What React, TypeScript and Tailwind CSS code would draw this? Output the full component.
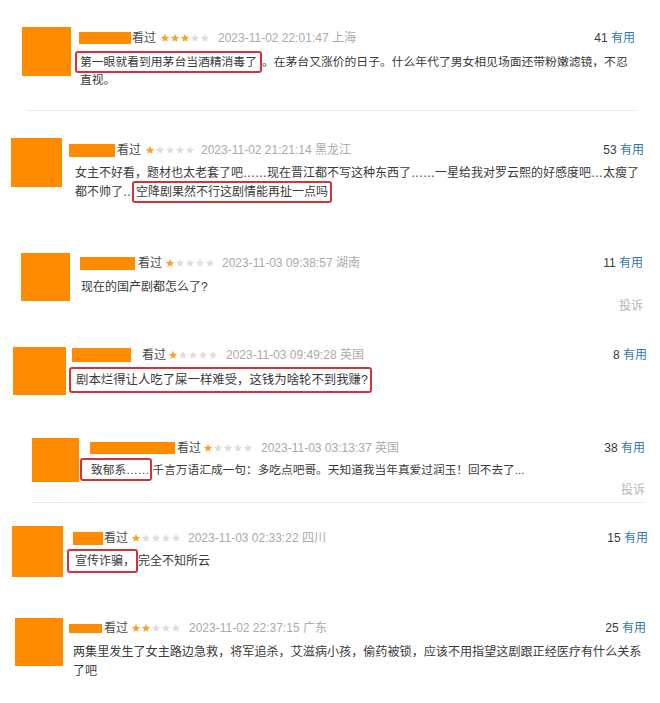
import React from 'react';

const STAR = 'M12 2l2.9 6.9 7.1.6-5.4 4.7 1.6 7-6.2-3.8-6.2 3.8 1.6-7L1.9 9.5 9 8.9z';

const Stars = ({ n }: { n: number }) => (
  <span className="flex">
    {[0, 1, 2, 3, 4].map((i) => (
      <svg key={i} viewBox="0 0 24 24" className="w-[10px] h-[10px]" fill={i < n ? '#f3a530' : '#dedede'}>
        <path d={STAR} />
      </svg>
    ))}
  </span>
);

const Box: React.FC<{ cls: string; children: React.ReactNode }> = ({ cls, children }) => (
  <span className={`border-2 border-[#d4323c] rounded-[3px] ${cls}`}>{children}</span>
);

type CommentProps = {
  rowCls: string;
  avatarCls: string;
  colCls: string;
  nameCls: string;
  seenCls: string;
  starsCls: string;
  dateCls: string;
  stars: number;
  time: string;
  place: string;
  useful: number;
  bodyCls: string;
  reportCls?: string;
  children: React.ReactNode;
};

const Comment: React.FC<CommentProps> = (p) => (
  <div className={`flex items-start ${p.rowCls}`}>
    <div className={`shrink-0 bg-[#ff8b00] ${p.avatarCls}`} />
    <div className={`flex-1 min-w-0 ${p.colCls}`}>
      {/* header line */}
      <div className="flex items-center h-[20px] whitespace-nowrap">
        <span className={`shrink-0 bg-[#ff8b00] ${p.nameCls}`} />
        <span className={`text-[12px] text-[#4a4a4a] ${p.seenCls}`}>看过</span>
        <span className={p.starsCls}>
          <Stars n={p.stars} />
        </span>
        <span className={`text-[12px] text-[#aaaaaa] ${p.dateCls}`}>
          {p.time} {p.place}
        </span>
        <span className="flex-1" />
        <span className="text-[12px] text-[#3a3a3a]">
          {p.useful} <span className="text-[#3377aa]">有用</span>
        </span>
      </div>
      <div className={`whitespace-nowrap text-[#3a3a3a] ${p.bodyCls}`}>{p.children}</div>
      {p.reportCls && (
        <div className={`text-right text-[12px] leading-[19px] text-[#b5b5b5] ${p.reportCls}`}>投诉</div>
      )}
    </div>
  </div>
);

export default function App() {
  return (
    <div className="w-[660px] h-[703px] bg-white overflow-hidden font-['Liberation_Sans','Noto_Sans_CJK_SC',sans-serif]">
      {/* 1 */}
      <div className="h-[120px]">
        <Comment
          rowCls="pl-[22px] pr-[25px]"
          avatarCls="w-[49px] h-[49px] mt-[27px]"
          colCls="ml-[9px] mt-[28px]"
          nameCls="w-[52px] h-[12px] -ml-[1px]"
          seenCls="ml-[1px]"
          starsCls="ml-[4px]"
          dateCls="ml-[8px]"
          stars={3}
          time="2023-11-02 22:01:47"
          place="上海"
          useful={41}
          bodyCls="mt-[5px] text-[11.8px] leading-[18px]"
        >
          <Box cls="-ml-[5px] px-[3px] py-[2px]">第一眼就看到用茅台当酒精消毒了</Box>
          。在茅台又涨价的日子。什么年代了男女相见场面还带粉嫩滤镜，不忍
          <br />
          直视。
        </Comment>
        <div className="mt-[21px] ml-[26px] mr-[24px] h-px bg-[#ececec]" />
      </div>

      {/* 2 */}
      <div className="h-[120px]">
        <Comment
          rowCls="pl-[11px] pr-[16px]"
          avatarCls="w-[51px] h-[49px] mt-[18px]"
          colCls="ml-[13px] mt-[20px]"
          nameCls="w-[46px] h-[13px] -ml-[6px]"
          seenCls="ml-[2px]"
          starsCls="ml-[4px]"
          dateCls="ml-[6px]"
          stars={1}
          time="2023-11-02 21:21:14"
          place="黑龙江"
          useful={53}
          bodyCls="mt-[4px] text-[12px] leading-[19px]"
        >
          女主不好看，题材也太老套了吧……现在晋江都不写这种东西了……一星给我对罗云熙的好感度吧…太瘦了
          <br />
          都不帅了…
          <Box cls="-ml-[3px] px-[2px] py-[2px]">空降剧果然不行这剧情能再扯一点吗</Box>
        </Comment>
      </div>

      {/* 3 */}
      <div className="h-[95px]">
        <Comment
          rowCls="pl-[21px] pr-[17px]"
          avatarCls="w-[49px] h-[48px] mt-[13px]"
          colCls="ml-[11px] mt-[13px]"
          nameCls="w-[55px] h-[13px] -ml-[1px]"
          seenCls="ml-[3px]"
          starsCls="ml-[3px]"
          dateCls="ml-[7px]"
          stars={1}
          time="2023-11-03 09:38:57"
          place="湖南"
          useful={11}
          bodyCls="mt-[5px] text-[12px] leading-[19px]"
          reportCls="mt-0"
        >
          现在的国产剧都怎么了?
        </Comment>
      </div>

      {/* 4 */}
      <div className="h-[90px]">
        <Comment
          rowCls="pl-[13px] pr-[13px]"
          avatarCls="w-[53px] h-[48px] mt-[12px]"
          colCls="ml-[10px] mt-[10px]"
          nameCls="w-[59px] h-[14px] -ml-[4px]"
          seenCls="ml-[11px]"
          starsCls="ml-[2px]"
          dateCls="ml-[8px]"
          stars={1}
          time="2023-11-03 09:49:28"
          place="英国"
          useful={8}
          bodyCls="mt-[6px] text-[12.4px] leading-[19px]"
        >
          <Box cls="-ml-[7px] pl-[5px] pr-[2px] py-[4px]">剧本烂得让人吃了屎一样难受，这钱为啥轮不到我赚?</Box>
        </Comment>
      </div>

      {/* 5 */}
      <div className="h-[85px]">
        <Comment
          rowCls="pl-[32px] pr-[15px]"
          avatarCls="w-[47px] h-[44px] mt-[13px]"
          colCls="ml-[12px] mt-[13px]"
          nameCls="w-[85px] h-[12px] -ml-[1px]"
          seenCls="ml-[2px]"
          starsCls="ml-[2px]"
          dateCls="ml-[8px]"
          stars={1}
          time="2023-11-03 03:13:37"
          place="英国"
          useful={38}
          bodyCls="mt-[2px] text-[11.7px] leading-[19px]"
          reportCls="mt-[2px]"
        >
          <Box cls="-ml-[11px] pl-[9px] pr-[1px] py-[3px]">致郁系……</Box>
          千言万语汇成一句：多吃点吧哥。天知道我当年真爱过润玉！回不去了...
        </Comment>
        <div className="mt-[2px] ml-[32px] mr-[15px] h-px bg-[#ececec]" />
      </div>

      {/* 6 */}
      <div className="h-[90px]">
        <Comment
          rowCls="pl-[12px] pr-[12px]"
          avatarCls="w-[51px] h-[51px] mt-[16px]"
          colCls="ml-[12px] mt-[18px]"
          nameCls="w-[30px] h-[13px] -ml-[2px]"
          seenCls="ml-[1px]"
          starsCls="ml-[3px]"
          dateCls="ml-[7px]"
          stars={1}
          time="2023-11-03 02:33:22"
          place="四川"
          useful={15}
          bodyCls="mt-[4px] text-[12px] leading-[19px]"
        >
          <Box cls="-ml-[8px] pl-[6px] pr-[1px] py-[3px]">宣传诈骗，</Box>
          完全不知所云
        </Comment>
      </div>

      {/* 7 */}
      <div className="h-[103px]">
        <Comment
          rowCls="pl-[15px] pr-[14px]"
          avatarCls="w-[48px] h-[48px] mt-[18px]"
          colCls="ml-[10px] mt-[18px]"
          nameCls="w-[33px] h-[9px] -ml-[4px]"
          seenCls="ml-[2px]"
          starsCls="ml-[3px]"
          dateCls="ml-[8px]"
          stars={2}
          time="2023-11-02 22:37:15"
          place="广东"
          useful={25}
          bodyCls="mt-[5px] text-[12.1px] leading-[19px]"
        >
          两集里发生了女主路边急救，将军追杀，艾滋病小孩，偷药被锁，应该不用指望这剧跟正经医疗有什么关系
          <br />
          了吧
        </Comment>
      </div>
    </div>
  );
}
